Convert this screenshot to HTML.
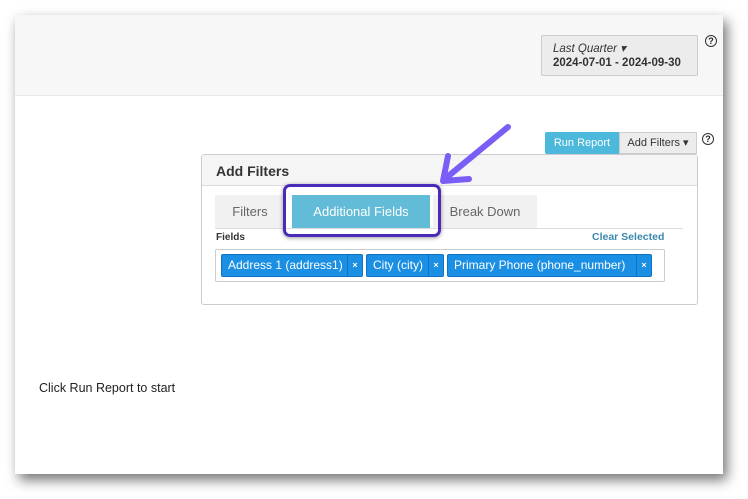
<!DOCTYPE html>
<html><head><style>
*{box-sizing:border-box;margin:0;padding:0}
body{width:748px;height:499px;background:#fff;position:relative;overflow:hidden;font-family:"Liberation Sans",sans-serif}
.page{position:absolute;left:15px;top:15px;width:708px;height:459px;background:#fff;box-shadow:4px 6px 12px rgba(0,0,0,.55)}
.top{position:absolute;left:0;top:0;width:708px;height:81px;background:#f7f7f7;border-bottom:1px solid #e8e8e8}
.abs{position:absolute}
.q{position:absolute;width:12px;height:12px;border:1px solid #333;border-radius:50%;font-size:9px;font-weight:bold;text-align:center;line-height:10px;color:#222}
.tag{position:absolute;top:254px;height:23px;background:#1a8fe3;border:1px solid #1271c0;border-radius:2px;color:#fff;font-size:12px;line-height:21px;padding-left:6px}
.tag span{position:absolute;right:0;top:0;width:15px;height:21px;border-left:1px solid #1271c0;text-align:center;font-size:9px;font-weight:bold}
</style></head><body>
<div class="page">
<div class="top"></div>
<div class="abs" style="left:526px;top:20px;width:157px;height:41px;background:#ececec;border:1px solid #ccc;border-radius:2px;padding:6px 0 0 11px;color:#333;font-size:11.5px;line-height:14px"><i>Last Quarter ▾</i><br><b>2024-07-01 - 2024-09-30</b></div>
<div class="q" style="left:690px;top:20px">?</div>
<div class="abs" style="left:530px;top:117px;width:74px;height:22px;background:#4cb8dc;color:#fff;font-size:11px;line-height:22px;text-align:center;border-radius:2px 0 0 2px">Run Report</div>
<div class="abs" style="left:604px;top:117px;width:78px;height:22px;background:#ececec;border:1px solid #ccc;color:#333;font-size:11px;line-height:20px;text-align:center">Add Filters ▾</div>
<div class="q" style="left:687px;top:118px">?</div>
<div class="abs" style="left:186px;top:139px;width:497px;height:151px;border:1px solid #ccc;border-radius:3px;background:#fff"></div>
<div class="abs" style="left:187px;top:140px;width:495px;height:31px;background:#f5f5f5;border-bottom:1px solid #ddd;font-size:14px;font-weight:bold;color:#333;padding:8px 0 0 14px">Add Filters</div>
<div class="abs" style="left:200px;top:180px;width:70px;height:33px;background:#f1f1f1;color:#666;font-size:13px;text-align:center;line-height:33px">Filters</div>
<div class="abs" style="left:277px;top:180px;width:138px;height:33px;background:#62bcd8;color:#fff;font-size:13px;text-align:center;line-height:33px">Additional Fields</div>
<div class="abs" style="left:418px;top:180px;width:104px;height:33px;background:#f1f1f1;color:#666;font-size:13px;text-align:center;line-height:33px">Break Down</div>
<div class="abs" style="left:200px;top:213px;width:468px;height:1px;background:#ddd"></div>
<div class="abs" style="left:268px;top:169px;width:158px;height:53px;border:3px solid #4a2bb8;border-radius:7px;box-shadow:0 1px 4px rgba(0,0,0,.4)"></div>
<div class="abs" style="left:201px;top:217px;font-size:10px;font-weight:bold;color:#333">Fields</div>
<div class="abs" style="left:577px;top:216px;font-size:10.5px;font-weight:bold;color:#3a87ad">Clear Selected</div>
<div class="abs" style="left:200px;top:234px;width:450px;height:33px;border:1px solid #ccc;border-radius:2px"></div>
</div>
<div class="tag" style="left:221px;width:142px">Address 1 (address1)<span>×</span></div>
<div class="tag" style="left:366px;width:78px">City (city)<span>×</span></div>
<div class="tag" style="left:447px;width:205px">Primary Phone (phone_number)<span>×</span></div>
<div class="abs" style="left:39px;top:381px;font-size:12.5px;color:#222">Click Run Report to start</div>
<svg class="abs" style="left:0;top:0" width="748" height="499"><g stroke="#7a5cf6" stroke-width="6" stroke-linecap="round" fill="none" stroke-linejoin="round"><path d="M508 127 L446 178"/><path d="M448 156 L443 181 L469 179"/></g></svg>
</body></html>
